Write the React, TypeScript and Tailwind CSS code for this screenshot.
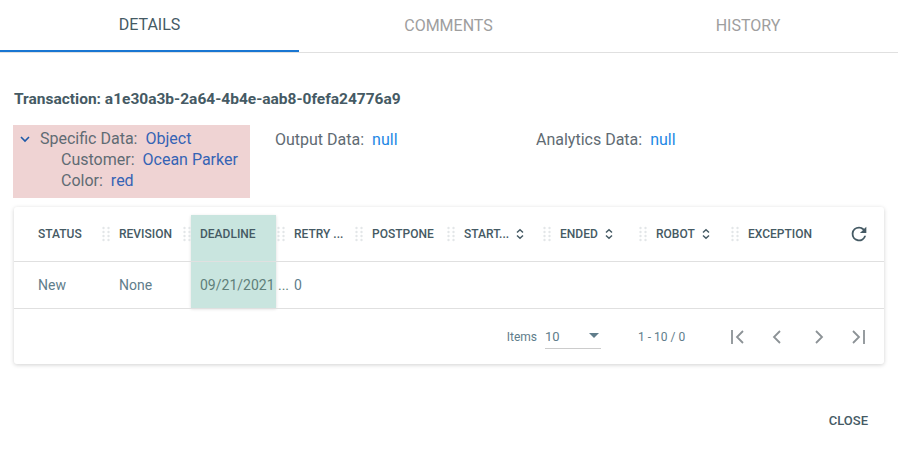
import React from "react";

const Grip = () => (
  <svg width="10" height="16" viewBox="0 0 10 16" className="shrink-0">
    {[2, 6, 10, 14].map((y) => (
      <g key={y}>
        <circle cx="2.5" cy={y} r="1.2" fill="#e3e6e8" />
        <circle cx="7.5" cy={y} r="1.2" fill="#e3e6e8" />
      </g>
    ))}
  </svg>
);

const Sort = () => (
  <svg width="10" height="12" viewBox="0 0 10 12" className="ml-[6px]">
    <path d="M2 4.5 L5 1.8 L8 4.5 M2 7.5 L5 10.2 L8 7.5" stroke="#455a64" strokeWidth="1.5" fill="none" />
  </svg>
);

const cols: { label: string; w: number; sort?: boolean; grip?: boolean }[] = [
  { label: "STATUS", w: 81, grip: true },
  { label: "REVISION", w: 81, grip: true },
  { label: "DEADLINE", w: 94, grip: true },
  { label: "RETRY ...", w: 78, grip: true },
  { label: "POSTPONE", w: 92, grip: true },
  { label: "START...", w: 96, sort: true, grip: true },
  { label: "ENDED", w: 96, sort: true, grip: true },
  { label: "ROBOT", w: 92, sort: true, grip: true },
  { label: "EXCEPTION", w: 90 },
];

export default function App() {
  return (
    <div className="w-[898px] h-[460px] bg-white relative" style={{ fontFamily: "Roboto, 'Liberation Sans', sans-serif" }}>
      <div className="flex h-[53px] border-b border-[#e0e0e0] text-[16px]">
        <div className="w-[299px] flex items-center justify-center text-[#455a64] border-b-2 border-[#1976d2]">DETAILS</div>
        <div className="w-[299px] flex items-center justify-center text-[#9e9e9e]">COMMENTS</div>
        <div className="flex-1 flex items-center justify-center text-[#9e9e9e]">HISTORY</div>
      </div>
      <div className="pl-[14px] pt-[35px] text-[15.5px] font-bold text-[#455a64]">Transaction: a1e30a3b-2a64-4b4e-aab8-0fefa24776a9</div>
      <div className="flex mt-[14px] text-[16px] text-[#5f6b73]">
        <div className="ml-[13px] w-[237px] h-[73px] bg-[#efd3d3] pl-[6px] pt-[3px] leading-[21px]">
          <div className="flex items-center">
            <svg width="12" height="12" viewBox="0 0 12 12" className="mr-[9px]">
              <path d="M2 4 L6 8 L10 4" stroke="#1e5aa8" strokeWidth="1.6" fill="none" />
            </svg>
            Specific Data:<span className="text-[#3563b5] ml-[8px]">Object</span>
          </div>
          <div className="pl-[42px]">Customer:<span className="text-[#3563b5] ml-[8px]">Ocean Parker</span></div>
          <div className="pl-[42px]">Color:<span className="text-[#3563b5] ml-[8px]">red</span></div>
        </div>
        <div className="ml-[25px] w-[261px] pt-[3px]">Output Data:<span className="text-[#1e88e5] ml-[8px]">null</span></div>
        <div className="pt-[3px]">Analytics Data:<span className="text-[#1e88e5] ml-[8px]">null</span></div>
      </div>
      <div className="mx-[14px] mt-[9px] w-[870px] rounded-[3px] bg-white shadow-[0_1px_4px_rgba(0,0,0,0.18)] relative text-[13px]">
        <div className="absolute left-[177px] top-[8px] w-[85px] h-[93px] bg-[#c9e5df] shadow-[0_1px_3px_rgba(0,0,0,0.15)]" />
        <div className="relative h-[55px] flex items-center border-b border-[#e0e0e0] text-[12px] font-medium text-[#455a64]">
          {cols.map((c) => (
            <div key={c.label} className="flex items-center shrink-0 pr-[8px]" style={{ width: c.w, marginLeft: c.label === "STATUS" ? 24 : 0 }}>
              <span>{c.label}</span>
              {c.sort && <Sort />}
              <div className="flex-1" />
              {c.grip && <Grip />}
            </div>
          ))}
          <div className="flex-1" />
          <svg width="22" height="22" viewBox="0 0 24 24" className="mr-[14px]">
            <path d="M17.65 6.35A7.96 7.96 0 0 0 12 4a8 8 0 1 0 7.73 10h-2.08A6 6 0 1 1 12 6c1.66 0 3.14.69 4.22 1.78L13 11h7V4l-2.35 2.35z" fill="#455a64" />
          </svg>
        </div>
        <div className="relative h-[47px] flex items-center border-b border-[#e0e0e0] text-[14px] text-[#607d8b]">
          <div className="ml-[24px] w-[81px]">New</div>
          <div className="w-[81px]">None</div>
          <div className="w-[94px] text-[#5f7f7a]">09/21/2021 ...</div>
          <div>0</div>
        </div>
        <div className="h-[55px] flex items-center justify-end text-[12px] text-[#607d8b]">
          <span>Items</span>
          <div className="ml-[8px] w-[56px] h-[24px] border-b border-[#ccc] flex items-center justify-between text-[13px]">
            <span>10</span>
            <svg width="10" height="6" viewBox="0 0 10 6" className="mr-[2px]"><path d="M0 0 L10 0 L5 5z" fill="#607d8b" /></svg>
          </div>
          <span className="ml-[37px] w-[90px]">1 - 10 / 0</span>
          {["M4 3v14M15 4l-6 6 6 6", "M12 4l-6 6 6 6", "M8 4l6 6-6 6", "M5 4l6 6-6 6M16 3v14"].map((d, i) => (
            <svg key={i} width="20" height="20" viewBox="0 0 20 20" className={i === 0 ? "" : "ml-[20px]"}>
              <path d={d} stroke="#8c9296" strokeWidth="1.8" fill="none" />
            </svg>
          ))}
          <div className="w-[16px]" />
        </div>
      </div>
      <div className="absolute right-[30px] top-[411px] text-[13px] font-medium text-[#455a64]">CLOSE</div>
    </div>
  );
}
